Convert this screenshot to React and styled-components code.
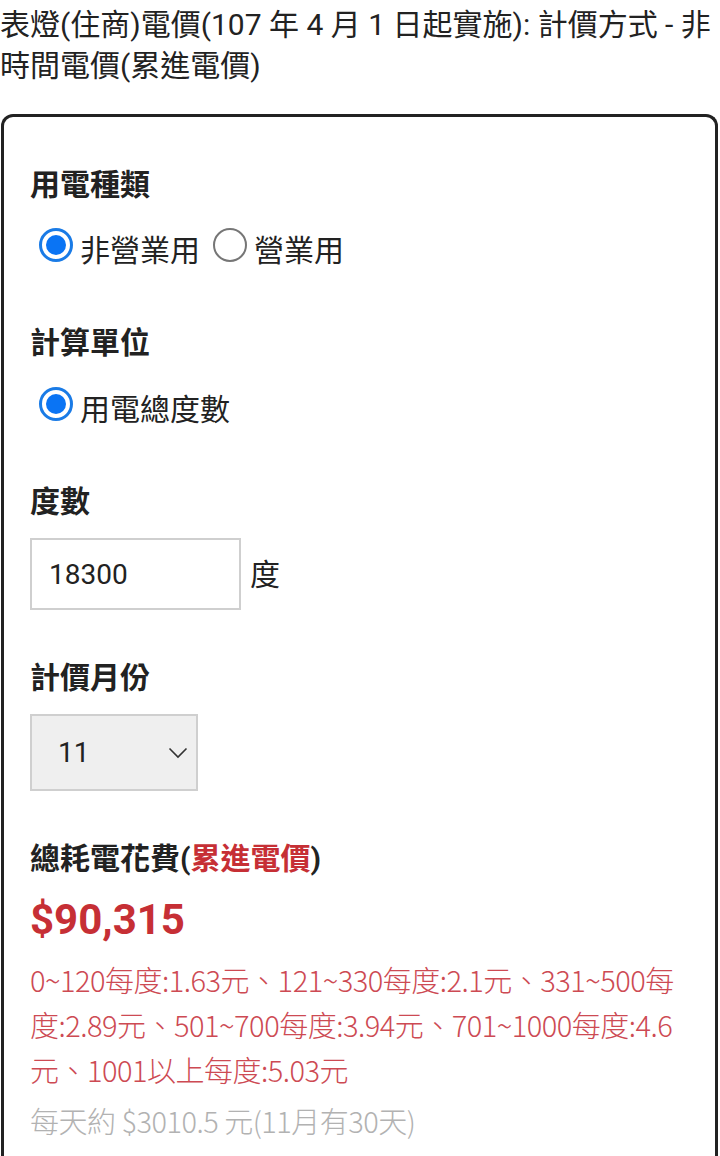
import React from "react";
import styled, { createGlobalStyle } from "styled-components";

const Global = createGlobalStyle`
  html, body { margin: 0; padding: 0; background: #fff; }
  body {
    font-family: Roboto, "Noto Sans CJK TC", "Noto Sans", sans-serif;
    color: #222;
  }
`;

const Page = styled.div`
  width: 720px;
`;

const Title = styled.h1`
  margin: 0;
  padding-top: 4px;
  font-size: 30px;
  line-height: 41px;
  font-weight: 400;
  color: #222;
`;

const Card = styled.section`
  margin: 28px 2px 0 1px;
  border: 3px solid #222;
  border-bottom: none;
  border-radius: 12px 12px 0 0;
  padding: 47px 22px 40px 26px;
  display: flex;
  flex-direction: column;
  align-items: flex-start;
`;

const Heading = styled.h2`
  margin: ${(p) => p.$top || 0}px 0 0;
  font-size: 30px;
  line-height: 41px;
  font-weight: 700;
  color: #222;
`;

const Red = styled.span`
  color: #c62f35;
`;

const RadioRow = styled.div`
  margin-top: ${(p) => p.$top || 0}px;
  display: flex;
  align-items: center;
  height: 41px;
  padding-left: 9px;
`;

const RadioOption = styled.label`
  display: flex;
  align-items: center;
  gap: 7px;
  margin-right: 13px;
  font-size: 30px;
  line-height: 41px;
  color: #222;
`;

const RadioDot = styled.span`
  box-sizing: border-box;
  width: 34px;
  height: 34px;
  border-radius: 50%;
  margin-bottom: 12px;
  flex: none;
  border: ${(p) => (p.$checked ? "3px solid #1a7be6" : "2.5px solid #767676")};
  display: flex;
  align-items: center;
  justify-content: center;
  &::after {
    content: "";
    width: 20px;
    height: 20px;
    border-radius: 50%;
    background: ${(p) => (p.$checked ? "#0a74f4" : "transparent")};
  }
`;

const InputRow = styled.div`
  margin-top: ${(p) => p.$top || 0}px;
  display: flex;
  align-items: center;
  gap: 9px;
  font-size: 30px;
  line-height: 41px;
`;

const NumberBox = styled.div`
  box-sizing: border-box;
  width: 211px;
  height: 72px;
  border: 2px solid #cfcfcf;
  padding-left: 17px;
  display: flex;
  align-items: center;
  font-size: 28px;
  color: #222;
`;

const SelectBox = styled.div`
  margin-top: ${(p) => p.$top || 0}px;
  box-sizing: border-box;
  width: 168px;
  height: 77px;
  border: 2px solid #cfcfcf;
  background: #efefef;
  padding: 0 8px 0 26px;
  display: flex;
  align-items: center;
  justify-content: space-between;
  font-size: 28px;
  color: #222;
`;

const Amount = styled.div`
  margin-top: ${(p) => p.$top || 0}px;
  font-size: 42px;
  line-height: 59px;
  font-weight: 700;
  color: #c62f35;
`;

const Note = styled.p`
  margin: ${(p) => p.$top || 0}px 0 0;
  font-family: "Noto Sans CJK TC", sans-serif;
  font-size: 29px;
  line-height: 45px;
  font-weight: 300;
  letter-spacing: -0.5px;
  color: ${(p) => p.$color};
`;

export default function App() {
  return (
    <Page>
      <Global />
      <Title>表燈(住商)電價(107 年 4 月 1 日起實施): 計價方式 - 非時間電價(累進電價)</Title>
      <Card>
        <Heading>用電種類</Heading>
        <RadioRow $top={25}>
          <RadioOption>
            <RadioDot $checked />
            非營業用
          </RadioOption>
          <RadioOption>
            <RadioDot />
            營業用
          </RadioOption>
        </RadioRow>

        <Heading $top={51}>計算單位</Heading>
        <RadioRow $top={26}>
          <RadioOption>
            <RadioDot $checked />
            用電總度數
          </RadioOption>
        </RadioRow>

        <Heading $top={51}>度數</Heading>
        <InputRow $top={16}>
          <NumberBox>18300</NumberBox>
          <span>度</span>
        </InputRow>

        <Heading $top={47}>計價月份</Heading>
        <SelectBox $top={16}>
          <span>11</span>
          <svg width="20" height="12" viewBox="0 0 20 12" fill="none">
            <path d="M1.5 1.5 L10 10 L18.5 1.5" stroke="#333" strokeWidth="1.6" />
          </svg>
        </SelectBox>

        <Heading $top={47}>
          總耗電花費(<Red>累進電價</Red>)
        </Heading>
        <Amount $top={11}>$90,315</Amount>
        <Note $top={8} $color="#cd4a53">
          0~120每度:1.63元、121~330每度:2.1元、331~500每度:2.89元、501~700每度:3.94元、701~1000每度:4.6元、1001以上每度:5.03元
        </Note>
        <Note $top={6} $color="#b2b2b2">
          每天約 $3010.5 元(11月有30天)
        </Note>
      </Card>
    </Page>
  );
}
